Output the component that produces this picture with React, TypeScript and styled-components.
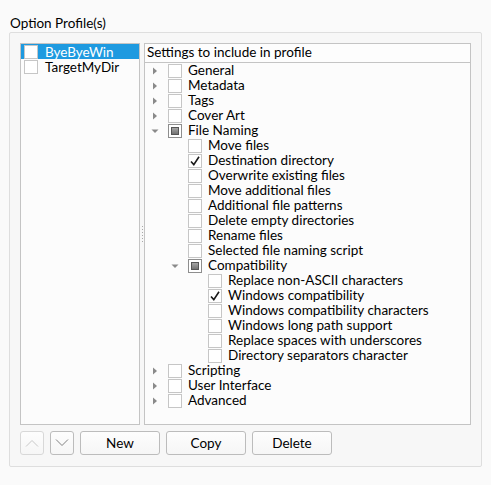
import React from "react";
import styled, { createGlobalStyle } from "styled-components";

const GlobalStyle = createGlobalStyle`
  body {
    margin: 0;
    background: #fafafa;
    font-family: Lato, "Noto Sans", sans-serif;
    font-size: 13.5px;
    color: #000;
  }
`;

interface TreeNode {
  label: string;
  state?: "off" | "on" | "partial";
  expanded?: boolean;
  children?: TreeNode[];
}

const tree: TreeNode[] = [
  { label: "General", children: [] },
  { label: "Metadata", children: [] },
  { label: "Tags", children: [] },
  { label: "Cover Art", children: [] },
  {
    label: "File Naming",
    state: "partial",
    expanded: true,
    children: [
      { label: "Move files" },
      { label: "Destination directory", state: "on" },
      { label: "Overwrite existing files" },
      { label: "Move additional files" },
      { label: "Additional file patterns" },
      { label: "Delete empty directories" },
      { label: "Rename files" },
      { label: "Selected file naming script" },
      {
        label: "Compatibility",
        state: "partial",
        expanded: true,
        children: [
          { label: "Replace non-ASCII characters" },
          { label: "Windows compatibility", state: "on" },
          { label: "Windows compatibility characters" },
          { label: "Windows long path support" },
          { label: "Replace spaces with underscores" },
          { label: "Directory separators character" },
        ],
      },
    ],
  },
  { label: "Scripting", children: [] },
  { label: "User Interface", children: [] },
  { label: "Advanced", children: [] },
];

const profiles = [
  { name: "ByeByeWin", selected: true },
  { name: "TargetMyDir", selected: false },
];

const Page = styled.div`
  padding: 15px 9px 0 9px;
  width: 473px;
`;

const GroupTitle = styled.div`
  height: 17px;
  line-height: 16px;
  padding-left: 1px;
`;

const GroupBox = styled.div`
  border: 1px solid #dedede;
  border-radius: 2px;
  background: #f7f7f7;
  padding: 10px 10px 11px 10px;
  display: flex;
  flex-direction: column;
  gap: 6px;
`;

const Panes = styled.div`
  display: flex;
  height: 382px;
`;

const ProfileList = styled.div`
  width: 118px;
  border: 1px solid #c4c4c4;
  background: #fcfcfc;
`;

const ProfileRow = styled.div<{ $selected: boolean }>`
  display: flex;
  align-items: center;
  height: 15px;
  line-height: 14px;
  gap: 7px;
  background: ${(p) => (p.$selected ? "#1e9ae0" : "transparent")};
  color: ${(p) => (p.$selected ? "#fff" : "#000")};
`;

const Splitter = styled.div`
  width: 4px;
  display: flex;
  flex-direction: column;
  align-items: center;
  justify-content: center;
  gap: 2px;
`;

const Dot = styled.span`
  width: 1px;
  height: 1px;
  background: #a8a8a8;
`;

const TreeView = styled.div`
  flex: 1;
  border: 1px solid #c4c4c4;
  background: #fcfcfc;
  display: flex;
  flex-direction: column;
`;

const TreeHeader = styled.div`
  height: 18px;
  line-height: 17px;
  padding-left: 2px;
  border-bottom: 1px solid #c4c4c4;
  background: #fdfdfd;
`;

const TreeRow = styled.div<{ $level: number }>`
  display: flex;
  align-items: center;
  height: 15px;
  line-height: 14px;
  padding-left: ${(p) => p.$level * 20}px;
`;

const Branch = styled.div`
  width: 20px;
  height: 15px;
  display: flex;
  align-items: center;
  justify-content: center;
`;

const RowLabel = styled.span`
  margin-left: 6px;
  white-space: nowrap;
  align-self: flex-start;
`;

const Box = styled.span<{ $state: "off" | "on" | "partial" }>`
  width: 12px;
  height: 12px;
  margin-left: 3px;
  flex: none;
  border: 1px solid ${(p) => (p.$state === "partial" ? "#8e8e8e" : "#c6c6c6")};
  background: #fff;
  display: flex;
  align-items: center;
  justify-content: center;
`;

const PartialMark = styled.span`
  width: 6px;
  height: 6px;
  border: 1px solid #555;
  background: linear-gradient(#a4a4a4, #727272);
`;

const ButtonRow = styled.div`
  display: flex;
  gap: 6px;
`;

const Button = styled.button<{ $wide?: boolean; $disabled?: boolean }>`
  width: ${(p) => (p.$wide ? 80 : 24)}px;
  height: 24px;
  padding: 0;
  border: 1px solid ${(p) => (p.$disabled ? "#d8d8d8" : "#bcbcbc")};
  border-radius: 3px;
  background: linear-gradient(#fdfdfd, #f6f6f6);
  font: inherit;
  color: #000;
  display: flex;
  align-items: center;
  justify-content: center;
`;

const CheckBox: React.FC<{ state?: "off" | "on" | "partial" }> = ({ state = "off" }) => (
  <Box $state={state}>
    {state === "partial" && <PartialMark />}
    {state === "on" && (
      <svg width="12" height="12" viewBox="0 0 12 12">
        <polyline points="2,6.5 4.8,9.6 10,1.8" fill="none" stroke="#1a1a1a" strokeWidth="1.6" />
      </svg>
    )}
  </Box>
);

const Arrow: React.FC<{ open: boolean }> = ({ open }) =>
  open ? (
    <svg width="8" height="6" viewBox="0 0 8 6">
      <polygon points="0.5,1.5 7.5,1.5 4,5" fill="#8a8a8a" />
    </svg>
  ) : (
    <svg width="6" height="8" viewBox="0 0 6 8">
      <polygon points="1,0.5 5,4 1,7.5" fill="#8a8a8a" />
    </svg>
  );

const renderNodes = (nodes: TreeNode[], level: number): React.ReactNode[] =>
  nodes.flatMap((n) => {
    const row = (
      <TreeRow key={`${level}-${n.label}`} $level={level}>
        <Branch>{n.children && <Arrow open={!!n.expanded} />}</Branch>
        <CheckBox state={n.state} />
        <RowLabel>{n.label}</RowLabel>
      </TreeRow>
    );
    return n.expanded && n.children ? [row, ...renderNodes(n.children, level + 1)] : [row];
  });

const Chevron: React.FC<{ up?: boolean; color: string }> = ({ up, color }) => (
  <svg width="14" height="8" viewBox="0 0 14 8">
    <polyline
      points={up ? "1,7.5 7,1.5 13,7.5" : "1,0.5 7,6.5 13,0.5"}
      fill="none"
      stroke={color}
      strokeWidth="1"
    />
  </svg>
);

export default function App() {
  return (
    <>
      <GlobalStyle />
      <Page>
        <GroupTitle>Option Profile(s)</GroupTitle>
        <GroupBox>
          <Panes>
            <ProfileList>
              {profiles.map((p) => (
                <ProfileRow key={p.name} $selected={p.selected}>
                  <CheckBox />
                  {p.name}
                </ProfileRow>
              ))}
            </ProfileList>
            <Splitter>
              {Array.from({ length: 6 }).map((_, i) => (
                <Dot key={i} />
              ))}
            </Splitter>
            <TreeView>
              <TreeHeader>Settings to include in profile</TreeHeader>
              {renderNodes(tree, 0)}
            </TreeView>
          </Panes>
          <ButtonRow>
            <Button $disabled>
              <Chevron up color="#c8c8c8" />
            </Button>
            <Button>
              <Chevron color="#808080" />
            </Button>
            <Button $wide>New</Button>
            <Button $wide>Copy</Button>
            <Button $wide>Delete</Button>
          </ButtonRow>
        </GroupBox>
      </Page>
    </>
  );
}
